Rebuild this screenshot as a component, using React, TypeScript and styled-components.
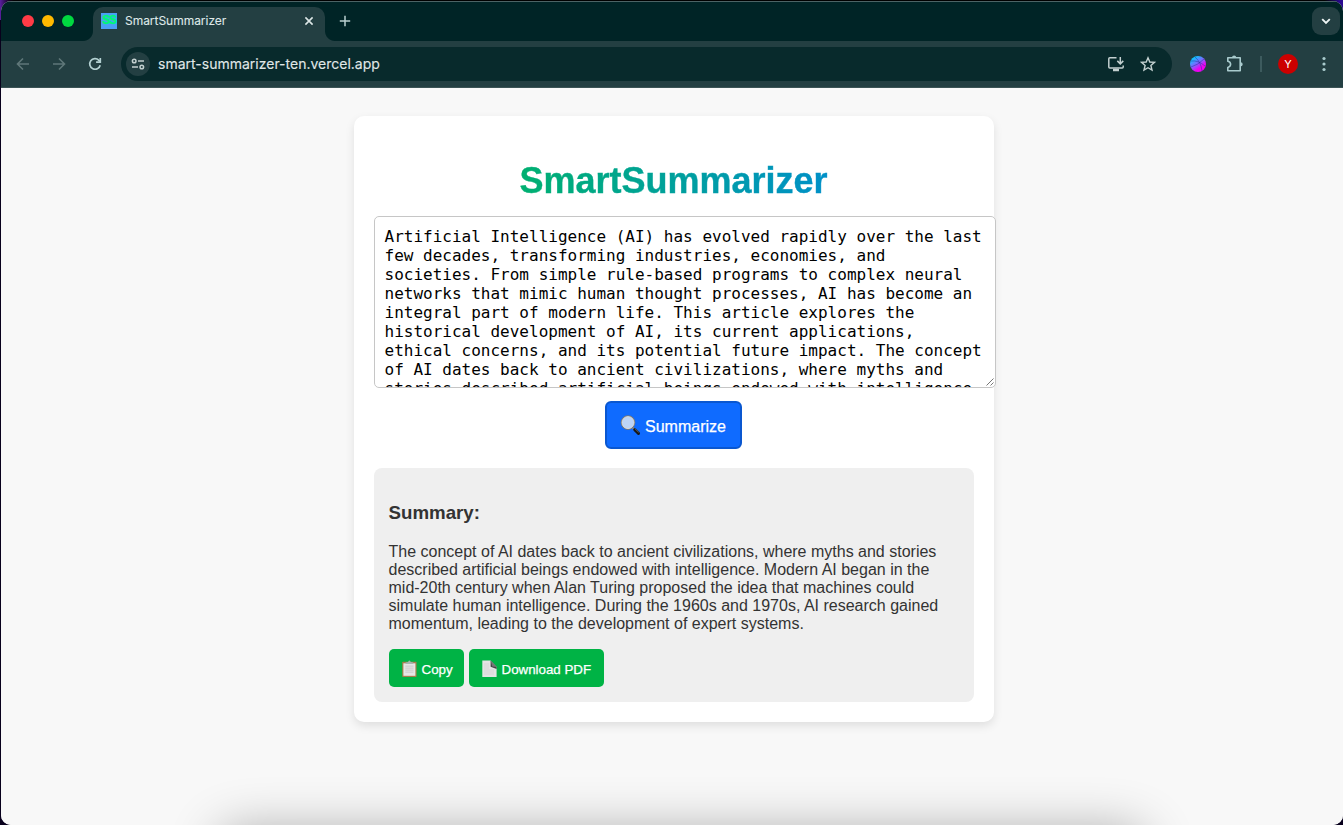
import React from "react";
import styled, { createGlobalStyle } from "styled-components";

const GlobalStyle = createGlobalStyle`
  * { box-sizing: border-box; }
  body { margin: 0; background: #14002e; overflow: hidden; }
`;

const uiFont = `Inter, Roboto, "Liberation Sans", sans-serif`;
const pageFont = `"Liberation Sans", Arial, sans-serif`;

const Desktop = styled.div`
  height: 825px;
  padding: 1px 0 0 1px;
  background: linear-gradient(90deg, #5a1fa0 0, #12001f 9px, #000 14px, #000 1325px, #2a0a90 1340px);
  background-size: 100% 20px;
  background-repeat: no-repeat;
  background-color: #08001c;
`;

const Window = styled.div`
  position: relative;
  display: flex;
  flex-direction: column;
  height: 824px;
  border-radius: 10px;
  overflow: hidden;
  background: #f8f8f8;
`;

const TabStrip = styled.div`
  display: flex;
  align-items: flex-end;
  height: 40px;
  background: #002426;
  border-top: 1px solid #4c6365;
  font-family: ${uiFont};
`;

const Lights = styled.div`
  display: flex;
  gap: 8px;
  align-self: center;
  width: 92px;
  margin-bottom: 1px;
  padding-left: 21px;
`;

const Light = styled.span<{ $color: string }>`
  width: 12px;
  height: 12px;
  border-radius: 50%;
  background: ${(p) => p.$color};
`;

const Tab = styled.div`
  position: relative;
  display: flex;
  align-items: center;
  width: 232px;
  height: 34px;
  padding: 0 9px 6px 8px;
  border-radius: 10px 10px 0 0;
  background: #233f42;

  &::before,
  &::after {
    content: "";
    position: absolute;
    bottom: 0;
    width: 10px;
    height: 10px;
  }
  &::before {
    left: -10px;
    background: radial-gradient(circle at 0 0, transparent 9.5px, #233f42 10.5px);
  }
  &::after {
    right: -10px;
    background: radial-gradient(circle at 100% 0, transparent 9.5px, #233f42 10.5px);
  }
`;

const Favicon = styled.span`
  display: flex;
  align-items: center;
  justify-content: center;
  width: 16px;
  height: 16px;
  background: #4a9ff5;
  color: #00f57a;
  font: bold 13px/16px "Liberation Mono", monospace;
  letter-spacing: -1px;
  -webkit-text-stroke: 0.5px #00f57a;
`;

const TabTitle = styled.span`
  flex: 1;
  padding-left: 8px;
  color: #dfe8e8;
  font-size: 12px;
  line-height: 16px;
  letter-spacing: -0.03px;
  white-space: nowrap;
  -webkit-text-stroke: 0.1px #dfe8e8;
`;

const Icon = styled.svg`
  display: block;
  flex: none;
  fill: none;
  stroke: currentColor;
`;

const NewTab = styled.div`
  display: flex;
  align-items: center;
  align-self: center;
  margin: 0 0 1px 14px;
  color: #b9cfd0;
`;

const TabSearch = styled.div`
  display: flex;
  align-items: center;
  justify-content: center;
  align-self: center;
  width: 28px;
  height: 28px;
  margin: 0 3px 1px auto;
  border-radius: 9px;
  background: #233f42;
  color: #eef5f5;
`;

const Toolbar = styled.div`
  display: flex;
  align-items: center;
  height: 47px;
  padding: 0 0 1px 13px;
  background: #233f42;
  border-bottom: 1px solid #3b5355;
  color: #a9cbcd;
  font-family: ${uiFont};
`;

const NavButtons = styled.div`
  display: flex;
  gap: 18px;
  width: 107px;
`;

const NavButton = styled.span<{ $dim?: boolean }>`
  color: ${(p) => (p.$dim ? "#5f7779" : "#b4d1d2")};
`;

const AddressBar = styled.div`
  display: flex;
  align-items: center;
  width: 1051px;
  height: 34px;
  padding: 0 15px 0 5px;
  border-radius: 17px;
  background: #082a2c;
  color: #c3d0d0;
`;

const SiteInfo = styled.span`
  display: flex;
  align-items: center;
  justify-content: center;
  width: 24px;
  height: 24px;
  border-radius: 50%;
  background: #233f42;
`;

const Url = styled.span`
  flex: 1;
  padding-left: 8px;
  color: #e0e8e8;
  font-size: 14px;
  line-height: 20px;
  -webkit-text-stroke: 0.1px #e0e8e8;
`;

const AddressActions = styled.div`
  display: flex;
  gap: 14px;
`;

const Extensions = styled.div`
  display: flex;
  align-items: center;
  gap: 16px;
  padding-left: 18px;
`;

const ExtensionsMenu = styled.span`
  margin-left: 4px;
`;

const BrowserMenu = styled.span`
  margin-left: 8px;
`;

const Divider = styled.span`
  width: 2px;
  height: 16px;
  background: #3d5b5e;
`;

const Avatar = styled.span`
  width: 20px;
  height: 20px;
  border-radius: 50%;
  background: #cc0000;
  color: #fff;
  font-size: 11px;
  line-height: 20px;
  text-align: center;
`;

const Page = styled.main`
  flex: 1;
  padding-top: 28px;
  padding-left: 353px;
  background: #f8f8f8;
  font-family: ${pageFont};
  color: #333;
`;

const Card = styled.section`
  display: flex;
  flex-direction: column;
  align-items: center;
  width: 640px;
  height: 606px;
  padding: 44px 20px 20px;
  border-radius: 10px;
  background: #fff;
  box-shadow: 0 4px 10px rgba(0, 0, 0, 0.1);
`;

const Title = styled.h1`
  margin: 0 1px 15px 0;
  font-size: 36px;
  line-height: 41px;
  font-weight: 700;
  background: linear-gradient(90deg, #00b070, #0090c8);
  background-clip: text;
  -webkit-background-clip: text;
  color: transparent;
  -webkit-text-stroke: 0.4px transparent;
`;

const Editor = styled.div`
  position: relative;
  align-self: flex-start;
  flex: none;
  width: 622px;
  height: 172px;
  padding: 10px 10.5px 10px 9.5px;
  overflow: hidden;
  border: 1px solid #c6c6c6;
  border-radius: 5px;
  background: #fff;
  color: #000;
  font: 16px/19px "DejaVu Sans Mono", monospace;
`;

const Grip = styled(Icon)`
  position: absolute;
  right: 0;
  bottom: 0;
  color: #666;
`;

const SummarizeButton = styled.button`
  display: flex;
  align-items: center;
  flex: none;
  gap: 4.5px;
  width: 137px;
  height: 48px;
  margin: 13px 2px 19px 0;
  padding: 1px 0 0 13px;
  border: 2px solid #0a57d0;
  border-radius: 6px;
  background: #0f6bff;
  color: #fff;
  font: 16px/18px ${pageFont};
  -webkit-text-stroke: 0.25px #fff;
`;

const ButtonLabel = styled.span`
  padding-top: 2px;
`;

const SummaryBox = styled.div`
  flex: none;
  width: 600px;
  height: 234px;
  padding: 34px 15px 15px;
  border-radius: 8px;
  background: #efefef;
`;

const SummaryHeading = styled.h3`
  margin: 0 0 20px -0.5px;
  font-size: 18.72px;
  line-height: 21px;
`;

const SummaryText = styled.p`
  margin: 0 0 16px -0.5px;
  font-size: 16px;
  line-height: 18px;
  white-space: nowrap;
`;

const Actions = styled.div`
  display: flex;
  gap: 5px;
`;

const ActionButton = styled.button<{ $width: number }>`
  display: flex;
  align-items: center;
  gap: 3.5px;
  width: ${(p) => p.$width}px;
  height: 38px;
  padding: 2px 0 0 12px;
  border: 0;
  border-radius: 5px;
  background: #00b345;
  color: #fff;
  font: 13.33px/16px ${pageFont};
  white-space: nowrap;
  -webkit-text-stroke: 0.25px #fff;
`;

const DockShadow = styled.div`
  position: absolute;
  left: 218px;
  bottom: -54px;
  width: 926px;
  height: 48px;
  border-radius: 22px;
  box-shadow: 0 0 50px 2px rgba(0, 0, 0, 0.3);
`;

const Back = () => (
  <Icon width="18" height="18" viewBox="0 0 18 18" strokeWidth="1.6">
    <path d="M15 9H4M9 3.5 3.5 9 9 14.5" />
  </Icon>
);

const Forward = () => (
  <Icon width="18" height="18" viewBox="0 0 18 18" strokeWidth="1.6">
    <path d="M3 9h11M9 3.5 14.5 9 9 14.5" />
  </Icon>
);

const Reload = () => (
  <Icon width="18" height="18" viewBox="0 0 18 18" strokeWidth="1.7">
    <path d="M14.2 10.2A5.3 5.3 0 1 1 12.9 5.3L14.2 6.8" />
    <path d="M14.3 3v4.2h-4.2" />
  </Icon>
);

const Tune = () => (
  <Icon width="14" height="14" viewBox="0 0 14 14" strokeWidth="1.5">
    <circle cx="3.2" cy="4" r="1.8" />
    <path d="M7 4h6M1 10h6" />
    <circle cx="10.8" cy="10" r="1.8" />
  </Icon>
);

const Install = () => (
  <Icon width="18" height="18" viewBox="0 0 18 18" strokeWidth="1.5">
    <path d="M9.5 2.8H2.8Q1.8 2.8 1.8 3.8V12Q1.8 13 2.8 13H15.2Q16.2 13 16.2 12V10.5" />
    <path d="M13.3 2v6.6M10.3 5.9l3 3 3-3" />
    <path d="M6 15h6" strokeWidth="2.6" />
  </Icon>
);

const Star = () => (
  <Icon width="18" height="18" viewBox="0 0 18 18" strokeWidth="1.4">
    <path d="M9 2.7 10.8 7l4.7.4-3.6 3.1 1.1 4.6L9 12.7l-4 2.4 1.1-4.6L2.5 7.4 7.2 7z" />
  </Icon>
);

const Ball = () => (
  <Icon width="16" height="16" viewBox="0 0 16 16" strokeWidth="0.7">
    <defs>
      <linearGradient id="ball" x1="0.1" y1="0" x2="0.8" y2="1">
        <stop offset="0.1" stopColor="#00cfff" />
        <stop offset="0.5" stopColor="#8a5cff" />
        <stop offset="0.75" stopColor="#f000f0" />
      </linearGradient>
    </defs>
    <circle cx="8" cy="8" r="8" fill="url(#ball)" stroke="none" />
    <path
      d="M1 5Q8 4 15 10M5 1Q11 6 12 15M1 11Q8 9 14 3"
      stroke="#25309a"
      opacity="0.7"
    />
  </Icon>
);

const Puzzle = () => (
  <Icon width="18" height="18" viewBox="0 0 18 18" strokeWidth="1.6">
    <path d="M1.8 2.8H14.2V15.8H1.8V12.4Q4.6 11.6 4.6 9.3T1.8 6.3Z" strokeLinejoin="round" />
    <path d="M6 2.6a2.1 2.1 0 0 1 4.2 0zM14.6 7.2a2.1 2.1 0 0 1 0 4.2z" fill="currentColor" stroke="none" />
  </Icon>
);

const Dots = () => (
  <Icon width="4" height="16" viewBox="0 0 4 16">
    <g fill="currentColor" stroke="none">
      <circle cx="2" cy="2.5" r="1.6" />
      <circle cx="2" cy="8" r="1.6" />
      <circle cx="2" cy="13.5" r="1.6" />
    </g>
  </Icon>
);

const Magnifier = () => (
  <Icon width="21" height="21" viewBox="0 0 21 21">
    <path d="m12.5 12.5 2.2 2.2" stroke="#8b8f94" strokeWidth="2" />
    <path d="m14.7 14.6 3.8 3.8" stroke="#181818" strokeWidth="3" strokeLinecap="round" />
    <path d="m14.8 13.5 3.9 3.8" stroke="#777" strokeWidth="0.8" />
    <circle cx="8" cy="7.6" r="6.7" fill="#bcd4f7" stroke="#73777c" strokeWidth="1.3" />
    <circle cx="8" cy="7.6" r="6" stroke="#d9dadb" strokeWidth="0.9" />
  </Icon>
);

const Clipboard = () => (
  <Icon width="17" height="18" viewBox="0 0 17 18">
    <rect x="1.2" y="1.8" width="14.4" height="15.2" rx="0.8" fill="#a77c4c" stroke="none" />
    <rect x="2.4" y="3.3" width="12" height="12.5" fill="#e6e6e6" stroke="none" />
    <path d="M4.3 6.2h8.2M4.3 8.2h8.2M4.3 10.2h8.2M4.3 12.2h8.2" stroke="#d0d0d0" strokeWidth="1.3" />
    <path d="M4.5 3.9V2.4l2.7-.5Q7.2.4 8.4.4t1.2 1.5l2.7.5v1.5z" fill="#a6b5b2" stroke="none" />
  </Icon>
);

const PageIcon = () => (
  <Icon width="17" height="18" viewBox="0 0 17 18">
    <path d="M1.3.6h8.3l6 6.4v10.1H1.3z" fill="#e4e4e4" stroke="none" />
    <path d="M9.6.6v6.2l6 2.2V7z" fill="#444" stroke="none" />
    <path d="M9.6.6 15.7 7l-4.4-.6z" fill="#777" stroke="none" />
    <path d="M3 4h5M3 6h5M3 8h5M3 10h10M3 12h10M3 14h10" stroke="#d2d2d2" strokeWidth="0.8" />
  </Icon>
);

const article =
  "Artificial Intelligence (AI) has evolved rapidly over the last few decades, transforming industries, economies, and societies. From simple rule-based programs to complex neural networks that mimic human thought processes, AI has become an integral part of modern life. This article explores the historical development of AI, its current applications, ethical concerns, and its potential future impact. The concept of AI dates back to ancient civilizations, where myths and stories described artificial beings endowed with intelligence.";

const summaryLines = [
  "The concept of AI dates back to ancient civilizations, where myths and stories",
  "described artificial beings endowed with intelligence. Modern AI began in the",
  "mid-20th century when Alan Turing proposed the idea that machines could",
  "simulate human intelligence. During the 1960s and 1970s, AI research gained",
  "momentum, leading to the development of expert systems.",
];

export default function App() {
  return (
    <Desktop>
      <GlobalStyle />
      <Window>
        <TabStrip>
          <Lights>
            <Light $color="#ff3b46" />
            <Light $color="#ffb900" />
            <Light $color="#00d840" />
          </Lights>
          <Tab>
            <Favicon>SS</Favicon>
            <TabTitle>SmartSummarizer</TabTitle>
            <Icon width="14" height="14" viewBox="0 0 14 14" strokeWidth="1.6" color="#dce6e6">
              <path d="m3.4 3.4 7.2 7.2M10.6 3.4l-7.2 7.2" />
            </Icon>
          </Tab>
          <NewTab>
            <Icon width="12" height="12" viewBox="0 0 12 12" strokeWidth="1.5">
              <path d="M6 .8v10.4M.8 6h10.4" />
            </Icon>
          </NewTab>
          <TabSearch>
            <Icon width="12" height="12" viewBox="0 0 12 12" strokeWidth="1.9">
              <path d="M2.2 4.2 6 8l3.8-3.8" />
            </Icon>
          </TabSearch>
        </TabStrip>
        <Toolbar>
          <NavButtons>
            <NavButton $dim><Back /></NavButton>
            <NavButton $dim><Forward /></NavButton>
            <NavButton><Reload /></NavButton>
          </NavButtons>
          <AddressBar>
            <SiteInfo><Tune /></SiteInfo>
            <Url>smart-summarizer-ten.vercel.app</Url>
            <AddressActions>
              <Install />
              <Star />
            </AddressActions>
          </AddressBar>
          <Extensions>
            <Ball />
            <ExtensionsMenu><Puzzle /></ExtensionsMenu>
            <Divider />
            <Avatar>Y</Avatar>
            <BrowserMenu><Dots /></BrowserMenu>
          </Extensions>
        </Toolbar>
        <Page>
          <Card>
            <Title>SmartSummarizer</Title>
            <Editor>
              {article}
              <Grip width="12" height="12" viewBox="0 0 12 12" strokeWidth="0.9">
                <path d="M3.5 10.5l7-7M7.5 10.5l3-3" />
              </Grip>
            </Editor>
            <SummarizeButton>
              <Magnifier />
              <ButtonLabel>Summarize</ButtonLabel>
            </SummarizeButton>
            <SummaryBox>
              <SummaryHeading>Summary:</SummaryHeading>
              <SummaryText>
                {summaryLines.map((line) => (
                  <React.Fragment key={line}>
                    {line}
                    <br />
                  </React.Fragment>
                ))}
              </SummaryText>
              <Actions>
                <ActionButton $width={75}>
                  <Clipboard />
                  <ButtonLabel>Copy</ButtonLabel>
                </ActionButton>
                <ActionButton $width={135}>
                  <PageIcon />
                  <ButtonLabel>Download PDF</ButtonLabel>
                </ActionButton>
              </Actions>
            </SummaryBox>
          </Card>
        </Page>
        <DockShadow />
      </Window>
    </Desktop>
  );
}
